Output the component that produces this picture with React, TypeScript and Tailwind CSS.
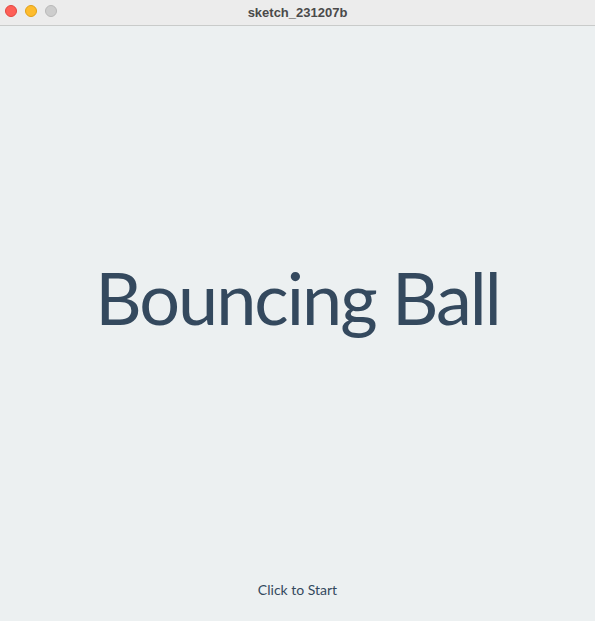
import React from "react";

export default function App() {
  return (
    <div className="w-[595px] h-[621px] flex flex-col bg-[#ecf0f1] overflow-hidden">
      {/* Title bar */}
      <div className="relative h-[26px] shrink-0 flex items-center justify-center bg-[#ececec] border-b border-[#c9cbca]">
        <div className="absolute left-[5px] top-[5px] flex gap-[8px]">
          <span className="w-[12px] h-[12px] rounded-full bg-[#fe5f57] border border-[#e2463f]" />
          <span className="w-[12px] h-[12px] rounded-full bg-[#febc2e] border border-[#e1a116]" />
          <span className="w-[12px] h-[12px] rounded-full bg-[#cdcdcd] border border-[#b9b9b9]" />
        </div>
        <span className="font-['Liberation_Sans',sans-serif] font-bold text-[13px] text-[#4a4a4a]">
          sketch_231207b
        </span>
      </div>

      {/* Canvas */}
      <div className="flex-1 flex flex-col items-center font-['Lato',sans-serif] text-[#34495e]">
        <div className="pt-[226px] text-[72px] leading-[90px] tracking-[-2px]">Bouncing Ball</div>
        <div className="flex-1" />
        <div className="pb-[21px] text-[14px] leading-[20px]">Click to Start</div>
      </div>
    </div>
  );
}
